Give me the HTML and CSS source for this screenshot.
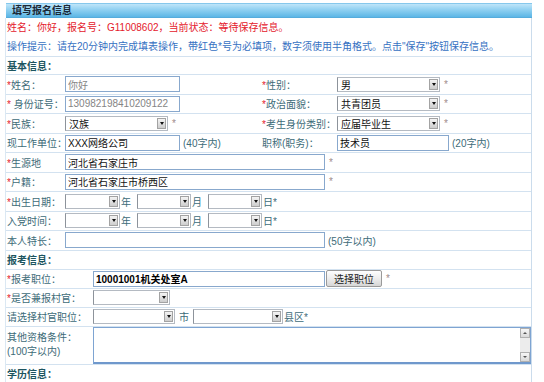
FILE: index.html
```html
<!DOCTYPE html>
<html lang="zh-CN">
<head>
<meta charset="utf-8">
<title>填写报名信息</title>
<link rel="stylesheet" href="styles.css">
</head>
<body>
<div class="bar">填写报名信息</div>
<div class="frame">
  <div class="msg red">姓名：你好，报名号：G11008602，当前状态：等待保存信息。</div>
  <div class="msg blue line">操作提示：请在20分钟内完成填表操作，带红色*号为必填项，数字须使用半角格式。点击"保存"按钮保存信息。</div>

  <div class="sec first">基本信息：</div>

  <div class="row g4">
    <div class="lab"><i>*</i>姓名：</div>
    <div class="val"><input class="inp ro w115" value="你好" readonly></div>
    <div class="lab lab2"><i>*</i>性别：</div>
    <div class="val v4"><span class="sel w103">男<b class="arr"><em></em></b></span><span class="st">*</span></div>
  </div>

  <div class="row g4">
    <div class="lab"><i>*</i> 身份证号：</div>
    <div class="val"><input class="inp ro w115" value="130982198410209122" readonly></div>
    <div class="lab lab2"><i>*</i>政治面貌：</div>
    <div class="val v4"><span class="sel w103">共青团员<b class="arr"><em></em></b></span><span class="st">*</span></div>
  </div>

  <div class="row g4">
    <div class="lab"><i>*</i>民族：</div>
    <div class="val"><span class="sel w103">汉族<b class="arr"><em></em></b></span><span class="st">*</span></div>
    <div class="lab lab2"><i>*</i>考生身份类别：</div>
    <div class="val v4"><span class="sel w103">应届毕业生<b class="arr"><em></em></b></span><span class="st">*</span></div>
  </div>

  <div class="row g4">
    <div class="lab">现工作单位：</div>
    <div class="val"><input class="inp w115" value="XXX网络公司"><span class="hint">(40字内)</span></div>
    <div class="lab lab2">职称(职务)：</div>
    <div class="val v4"><input class="inp w112" value="技术员"><span class="hint">(20字内)</span></div>
  </div>

  <div class="row g2">
    <div class="lab"><i>*</i>生源地</div>
    <div class="val"><input class="inp w260" value="河北省石家庄市"><span class="st">*</span></div>
  </div>

  <div class="row g2">
    <div class="lab"><i>*</i>户籍：</div>
    <div class="val"><input class="inp w260" value="河北省石家庄市桥西区"><span class="st">*</span></div>
  </div>

  <div class="row g2">
    <div class="lab"><i>*</i>出生日期：</div>
    <div class="val"><span class="sel w55"><b class="arr"><em></em></b></span><span class="u">年</span><span class="sel w54"><b class="arr"><em></em></b></span><span class="u">月</span><span class="sel w54"><b class="arr"><em></em></b></span><span class="u last">日*</span></div>
  </div>

  <div class="row g2">
    <div class="lab">入党时间：</div>
    <div class="val"><span class="sel w55"><b class="arr"><em></em></b></span><span class="u">年</span><span class="sel w54"><b class="arr"><em></em></b></span><span class="u">月</span><span class="sel w54"><b class="arr"><em></em></b></span><span class="u last">日*</span></div>
  </div>

  <div class="row g2">
    <div class="lab">本人特长：</div>
    <div class="val"><input class="inp w260" value=""><span class="hint">(50字以内)</span></div>
  </div>

  <div class="sec s2">报考信息：</div>

  <div class="row k2 r19">
    <div class="lab"><i>*</i>报考职位：</div>
    <div class="val"><input class="inp w232 bold" value="10001001机关处室A"><button class="btn" type="button">选择职位</button><span class="st">*</span></div>
  </div>

  <div class="row k2 r19">
    <div class="lab"><i>*</i>是否兼报村官：</div>
    <div class="val"><span class="sel w77"><b class="arr"><em></em></b></span></div>
  </div>

  <div class="row k2 r19">
    <div class="lab">请选择村官职位：</div>
    <div class="val"><span class="sel w82"><b class="arr"><em></em></b></span><span class="u city">市</span><span class="sel w90"><b class="arr"><em></em></b></span><span class="u">县区*</span></div>
  </div>

  <div class="row k2 tall">
    <div class="lab two">其他资格条件：<br>(100字以内)</div>
    <div class="val"><div class="area"><div class="sb"><span class="sbb"><em class="up"></em></span><span class="sbt"></span><span class="sbb"><em></em></span></div></div></div>
  </div>

  <div class="sec s3">学历信息：</div>
</div>
</body>
</html>
```
FILE: styles.css
```css
html, body {
  background: #fff;
}
body {
  margin: 3px 0 0 5px;
  font-family: "Liberation Sans", "Noto Sans CJK SC", sans-serif;
  font-size: 10px;
  color: #3d6b78;
  width: 527px;
}
.bar {
  height: 15px;
  box-sizing: border-box;
  margin-left: 1px;
  background: linear-gradient(#bfe5f9, #8fd0f1 45%, #5cb6e6);
  border-top: 1px solid #86c8ec;
  border-bottom: 1px solid #55acdc;
  padding-left: 6px;
  font-weight: bold;
  color: #1b2836;
  line-height: 13px;
}
.frame {
  border-left: 1px solid #dbe8f3;
  border-right: 1px solid #cbdcec;
}
.msg {
  height: 19px;
  line-height: 19px;
  padding-left: 1px;
  white-space: nowrap;
}
.msg.line { border-bottom: 1px solid #d3e2f0; }
.red { color: #e4202c; }
.blue { color: #3671c2; }

.sec {
  height: 19px;
  box-sizing: border-box;
  border-bottom: 1px solid #d3e2f0;
  display: flex;
  align-items: center;
  padding-left: 1px;
  font-weight: bold;
  color: #1c5560;
}
.sec.first { height: 18px; }
.sec.s3 { border-bottom: none; height: 18px; }

.row {
  display: grid;
  align-items: center;
  height: 19.5px;
  box-sizing: border-box;
  border-bottom: 1px solid #d3e2f0;
}
.row.r19 { height: 19px; }
.row.tall { height: 38px; }
.g4 { grid-template-columns: 58px 195px 76px 1fr; }
.g2 { grid-template-columns: 58px 1fr; }
.k2 { grid-template-columns: 86px 1fr; }

.lab {
  padding-left: 1px;
  white-space: pre;
}
.lab i {
  font-style: normal;
  color: #e4202c;
}
.lab2 { padding-left: 3px; }
.lab.two { line-height: 14px; white-space: normal; }
.val {
  display: flex;
  align-items: center;
  padding-left: 1px;
}
.v4 { padding-left: 2px; }

.inp {
  height: 16px;
  box-sizing: border-box;
  border: 1px solid #88a8cd;
  padding: 0 2px;
  margin: 0;
  font: inherit;
  color: #111;
  background: #fff;
  outline: none;
}
.inp.ro { color: #858585; }
.inp.bold { font-weight: bold; color: #000; }
.w112 { width: 112px; }
.w115 { width: 115px; }
.w232 { width: 232px; }
.w260 { width: 260px; }
.w55 { width: 55px; }
.w54 { width: 54px; }
.w77 { width: 77px; }
.w82 { width: 82px; }
.w90 { width: 90px; }
.w103 { width: 103px; }

.sel {
  height: 15px;
  box-sizing: border-box;
  border: 1px solid #b4bac2;
  border-left-color: #8d939b;
  display: inline-flex;
  align-items: center;
  justify-content: space-between;
  padding-left: 3px;
  color: #111;
  background: #fff;
}
.arr {
  width: 9px;
  height: 11px;
  box-sizing: border-box;
  margin-left: auto;
  margin-right: 1px;
  border: 1px solid #a3a3a3;
  background: linear-gradient(#f4f4f4, #cdcdcd);
  display: flex;
  align-items: center;
  justify-content: center;
}
.arr em {
  width: 0;
  height: 0;
  border-left: 2.5px solid transparent;
  border-right: 2.5px solid transparent;
  border-top: 3px solid #111;
}
.st {
  margin-left: 4px;
  color: #a08c8c;
}
.hint { margin-left: 3px; }
.u { margin-right: 6px; padding-left: 1px; }
.u.last { margin-right: 0; }
.u.city { margin-left: 3px; margin-right: 4px; }

.btn {
  height: 17px;
  width: 56px;
  margin: 0 0 0 1px;
  padding: 0;
  border: 1px solid #9a9a9a;
  border-radius: 2px;
  background: linear-gradient(#fefefe, #e9e9e9 60%, #d6d6d6);
  font: inherit;
  color: #222;
}

.area {
  width: 438px;
  height: 37px;
  box-sizing: border-box;
  border: 1px solid #7ea4d2;
  border-bottom: 2px solid #6f98cc;
  background: #fff;
  display: flex;
  justify-content: flex-end;
}
.sb {
  width: 10px;
  display: flex;
  flex-direction: column;
  background: #ececec;
}
.sbt { flex: 1; }
.sbb {
  height: 10px;
  box-sizing: border-box;
  border: 1px solid #b0b0b0;
  background: linear-gradient(#f7f7f7, #d9d9d9);
  display: flex;
  align-items: center;
  justify-content: center;
}
.sbb em {
  width: 0;
  height: 0;
  border-left: 2px solid transparent;
  border-right: 2px solid transparent;
  border-top: 2px solid #555;
}
.sbb em.up {
  border-top: none;
  border-bottom: 2px solid #555;
}
```
